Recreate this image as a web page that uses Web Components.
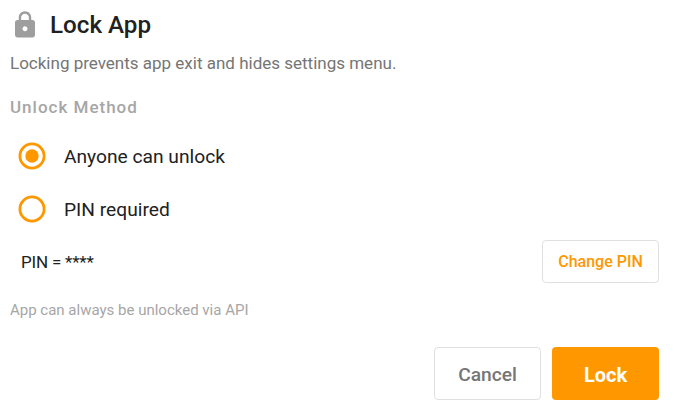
<!DOCTYPE html>
<html>
<head>
<meta charset="utf-8">
<style>
html, body { margin: 0; padding: 0; background: #fff; }
body { width: 674px; height: 414px; overflow: hidden; font-family: Roboto, sans-serif; }
</style>
</head>
<body>
<lock-dialog>
  <dialog-title>Lock App</dialog-title>
  <p-text>Locking prevents app exit and hides settings menu.</p-text>
  <section-label>Unlock Method</section-label>
  <radio-row checked>Anyone can unlock</radio-row>
  <radio-row>PIN required</radio-row>
  <pin-row>PIN = ****</pin-row>
  <hint-text>App can always be unlocked via API</hint-text>
  <dialog-actions></dialog-actions>
</lock-dialog>
<script>
class LockDialog extends HTMLElement {
    constructor() {
        super();
        this.attachShadow({ mode: 'open' }).innerHTML = `
            <style>
                :host { display: flex; flex-direction: column; width: 674px; height: 414px; box-sizing: border-box; padding: 0 15px 0 10px; background: #fff; }
            </style>
            <slot></slot>
        `;
    }
}

class DialogTitle extends HTMLElement {
    constructor() {
        super();
        this.attachShadow({ mode: 'open' }).innerHTML = `
            <style>
                :host { display: flex; align-items: center; height: 50px; font-size: 24.2px; font-weight: 500; color: #212121; }
                svg { width: 30px; height: 30px; margin: 0 10px 0 0; flex: none; }
            </style>
            <svg viewBox="0 0 24 24"><path fill="#9e9e9e" d="M18 8h-1V6c0-2.76-2.24-5-5-5S7 3.24 7 6v2H6c-1.1 0-2 .9-2 2v10c0 1.1.9 2 2 2h12c1.1 0 2-.9 2-2V10c0-1.1-.9-2-2-2zm-6 9c-1.1 0-2-.9-2-2s.9-2 2-2 2 .9 2 2-.9 2-2 2zm3.1-9H8.9V6c0-1.71 1.39-3.1 3.1-3.1 1.71 0 3.1 1.39 3.1 3.1v2z"/></svg>
            <slot></slot>
        `;
    }
}

class PText extends HTMLElement {
    constructor() {
        super();
        this.attachShadow({ mode: 'open' }).innerHTML = `
            <style>
                :host { display: block; font-size: 17px; line-height: 24px; margin-top: 1px; color: #757575; }
            </style>
            <slot></slot>
        `;
    }
}

class SectionLabel extends HTMLElement {
    constructor() {
        super();
        this.attachShadow({ mode: 'open' }).innerHTML = `
            <style>
                :host { display: block; font-size: 17px; font-weight: 500; line-height: 24px; margin-top: 20px; letter-spacing: 1px; color: #a6a6a6; }
            </style>
            <slot></slot>
        `;
    }
}

class RadioRow extends HTMLElement {
    constructor() {
        super();
        const dot = this.hasAttribute('checked') ? '<circle cx="14" cy="14" r="6.7" fill="#ff9800"/>' : '';
        this.attachShadow({ mode: 'open' }).innerHTML = `
            <style>
                :host { display: flex; align-items: center; height: 53px; font-size: 19.2px; color: #212121; }
                :host([checked]) { margin-top: 10px; }
                svg { width: 28px; height: 28px; margin: 0 18.5px 0 7.5px; flex: none; }
                span { padding-top: 2px; }
            </style>
            <svg viewBox="0 0 28 28"><circle cx="14" cy="14" r="12.1" fill="none" stroke="#ff9800" stroke-width="2.8"/>${dot}</svg>
            <span><slot></slot></span>
        `;
    }
}

class OutlineButton extends HTMLElement {
    constructor() {
        super();
        this.attachShadow({ mode: 'open' }).innerHTML = `
            <style>
                :host { display: flex; align-items: center; justify-content: center; box-sizing: border-box; border: 1px solid #e0e0e0; border-radius: 4px; background: #fff; font-weight: 500; color: var(--btn-color, #757575); }
            </style>
            <slot></slot>
        `;
    }
}

class PinRow extends HTMLElement {
    constructor() {
        super();
        this.attachShadow({ mode: 'open' }).innerHTML = `
            <style>
                :host { display: flex; align-items: center; justify-content: space-between; height: 44px; margin-top: 4px; font-size: 17px; letter-spacing: -0.2px; color: #212121; padding-left: 11px; }
                span { padding-top: 2px; }
                outline-button { width: 117px; height: 43px; font-size: 16px; letter-spacing: 0; --btn-color: #ff9800; }
            </style>
            <span><slot></slot></span>
            <outline-button>Change PIN</outline-button>
        `;
    }
}

class HintText extends HTMLElement {
    constructor() {
        super();
        this.attachShadow({ mode: 'open' }).innerHTML = `
            <style>
                :host { display: block; font-size: 15px; line-height: 20px; margin-top: 17px; color: #a6a6a6; }
            </style>
            <slot></slot>
        `;
    }
}

class DialogActions extends HTMLElement {
    constructor() {
        super();
        this.attachShadow({ mode: 'open' }).innerHTML = `
            <style>
                :host { display: flex; justify-content: flex-end; gap: 11px; margin-top: 27px; }
                outline-button, .primary { width: 107px; height: 53px; font-size: 19.2px; box-sizing: border-box; padding-top: 2px; }
                .primary { display: flex; align-items: center; justify-content: center; background: #ff9800; color: #fff; font-size: 20px; font-weight: 700; border-radius: 4px; }
            </style>
            <outline-button>Cancel</outline-button>
            <div class="primary">Lock</div>
        `;
    }
}

customElements.define('lock-dialog', LockDialog);
customElements.define('dialog-title', DialogTitle);
customElements.define('p-text', PText);
customElements.define('section-label', SectionLabel);
customElements.define('radio-row', RadioRow);
customElements.define('outline-button', OutlineButton);
customElements.define('pin-row', PinRow);
customElements.define('hint-text', HintText);
customElements.define('dialog-actions', DialogActions);
</script>
</body>
</html>
